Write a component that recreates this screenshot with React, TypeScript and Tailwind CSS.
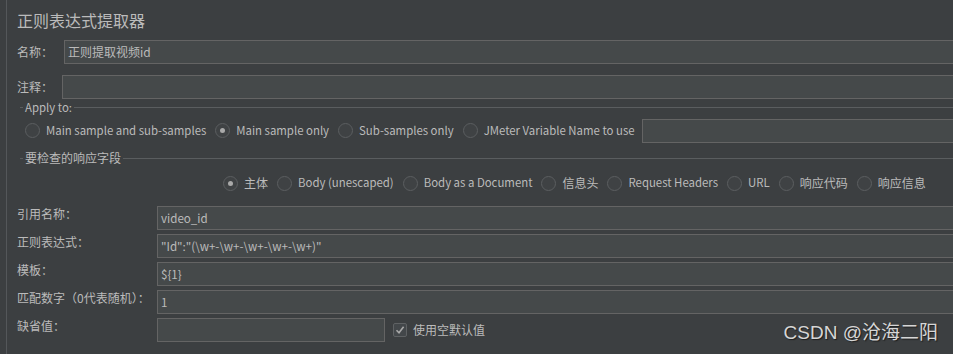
import React from "react";

const FONT = { fontFamily: '"Noto Sans CJK SC", "Noto Sans", sans-serif' };

function Radio({ checked, label, latin, gapAfter = true }: { checked?: boolean; label: string; latin?: boolean; gapAfter?: boolean }) {
  return (
    <div className={"flex items-center " + (gapAfter ? "mr-[9px]" : "")}>
      <div className="w-[15px] h-[15px] rounded-full border border-[#5b5e60] bg-[#3f4244] flex items-center justify-center shrink-0">
        {checked ? <div className="w-[5px] h-[5px] rounded-full bg-[#a9a9a9]" /> : null}
      </div>
      <span className={"ml-[6px] whitespace-nowrap " + (latin ? "text-[11.4px]" : "")}>{label}</span>
    </div>
  );
}

function Legend({ text, latin }: { text: string; latin?: boolean }) {
  return (
    <div className="flex items-center h-[14px] ml-[3px]">
      <div className="w-[3px] h-px bg-[#5a5d5f]" />
      <span className={"px-[2px] leading-[14px] whitespace-nowrap " + (latin ? "text-[11.4px]" : "")}>{text}</span>
      <div className="flex-1 h-px bg-[#5a5d5f]" />
    </div>
  );
}

function Field({ label, value, mt }: { label: string; value?: string; mt: string }) {
  return (
    <div className={"flex items-start h-[24px] " + mt}>
      <div className="w-[140px] leading-[16px] whitespace-nowrap">{label}</div>
      <div className="flex-1 h-[24px] bg-[#45494a] border border-[#646464] pl-[3px] leading-[22px] whitespace-nowrap text-[11.6px]">
        {value}
      </div>
    </div>
  );
}

export default function App() {
  return (
    <div
      className="relative w-[953px] h-[354px] bg-[#3c3f41] overflow-hidden text-[#bbbbbb] text-[12px] flex"
      style={FONT}
    >
      <div className="w-[6px] shrink-0" />
      <div className="w-px bg-[#54575a] shrink-0" />
      <div className="w-[1100px] shrink-0 pl-[10px] flex flex-col">
        <div className="mt-[8px] h-[24px] leading-[24px] text-[16px]">正则表达式提取器</div>

        <div className="mt-[8px] flex items-center h-[24px]">
          <div className="w-[47px] whitespace-nowrap">名称：</div>
          <div className="flex-1 h-[24px] bg-[#45494a] border border-[#646464] pl-[3px] leading-[22px]">正则提取视频id</div>
        </div>

        <div className="mt-[11px] flex items-center h-[24px]">
          <div className="w-[45px] whitespace-nowrap">注释：</div>
          <div className="flex-1 h-[24px] bg-[#45494a] border border-[#646464]" />
        </div>

        <div className="mt-[1px]">
          <Legend text="Apply to:" latin />
        </div>

        <div className="mt-[5px] h-[24px] flex items-center ml-[8px]">
          <Radio latin label="Main sample and sub-samples" />
          <Radio latin checked label="Main sample only" />
          <Radio latin label="Sub-samples only" />
          <Radio latin label="JMeter Variable Name to use" gapAfter={false} />
          <div className="ml-[7px] flex-1 h-[24px] bg-[#45494a] border border-[#646464]" />
        </div>

        <div className="mt-[8px]">
          <Legend text="要检查的响应字段" />
        </div>

        <div className="mt-[10px] h-[16px] flex items-center ml-[206px]">
          <Radio checked label="主体" />
          <Radio latin label="Body (unescaped)" />
          <Radio latin label="Body as a Document" />
          <Radio label="信息头" />
          <Radio latin label="Request Headers" />
          <Radio latin label="URL" />
          <Radio label="响应代码" />
          <Radio label="响应信息" />
        </div>

        <Field mt="mt-[15px]" label="引用名称：" value="video_id" />
        <Field mt="mt-[4px]" label="正则表达式：" value={'"Id":"(\\w+-\\w+-\\w+-\\w+-\\w+)"'} />
        <Field mt="mt-[4px]" label="模板：" value="${1}" />
        <Field mt="mt-[4px]" label="匹配数字（0代表随机）：" value="1" />

        <div className="mt-[4px] flex items-start h-[24px]">
          <div className="w-[140px] leading-[16px]">缺省值：</div>
          <div className="w-[228px] h-[24px] bg-[#45494a] border border-[#646464]" />
          <div className="ml-[8px] h-[24px] flex items-center">
            <div className="w-[14px] h-[14px] rounded-[2px] border border-[#5f6264] bg-[#43474a] flex items-center justify-center">
              <svg width="10" height="10" viewBox="0 0 10 10">
                <path d="M1.5 5.2 L4 7.8 L8.6 1.8" fill="none" stroke="#a8a8a8" strokeWidth="1.6" />
              </svg>
            </div>
            <span className="ml-[6px]">使用空默认值</span>
          </div>
        </div>
      </div>

      <div
        className="absolute right-[15px] top-[322px] text-[19px] leading-[22px] text-[#d6d6d6] whitespace-nowrap"
        style={{ fontFamily: '"Liberation Sans", "Noto Sans CJK SC", sans-serif', textShadow: "1px 1px 1px #1e1e1e" }}
      >
        CSDN @沧海二阳
      </div>
    </div>
  );
}
